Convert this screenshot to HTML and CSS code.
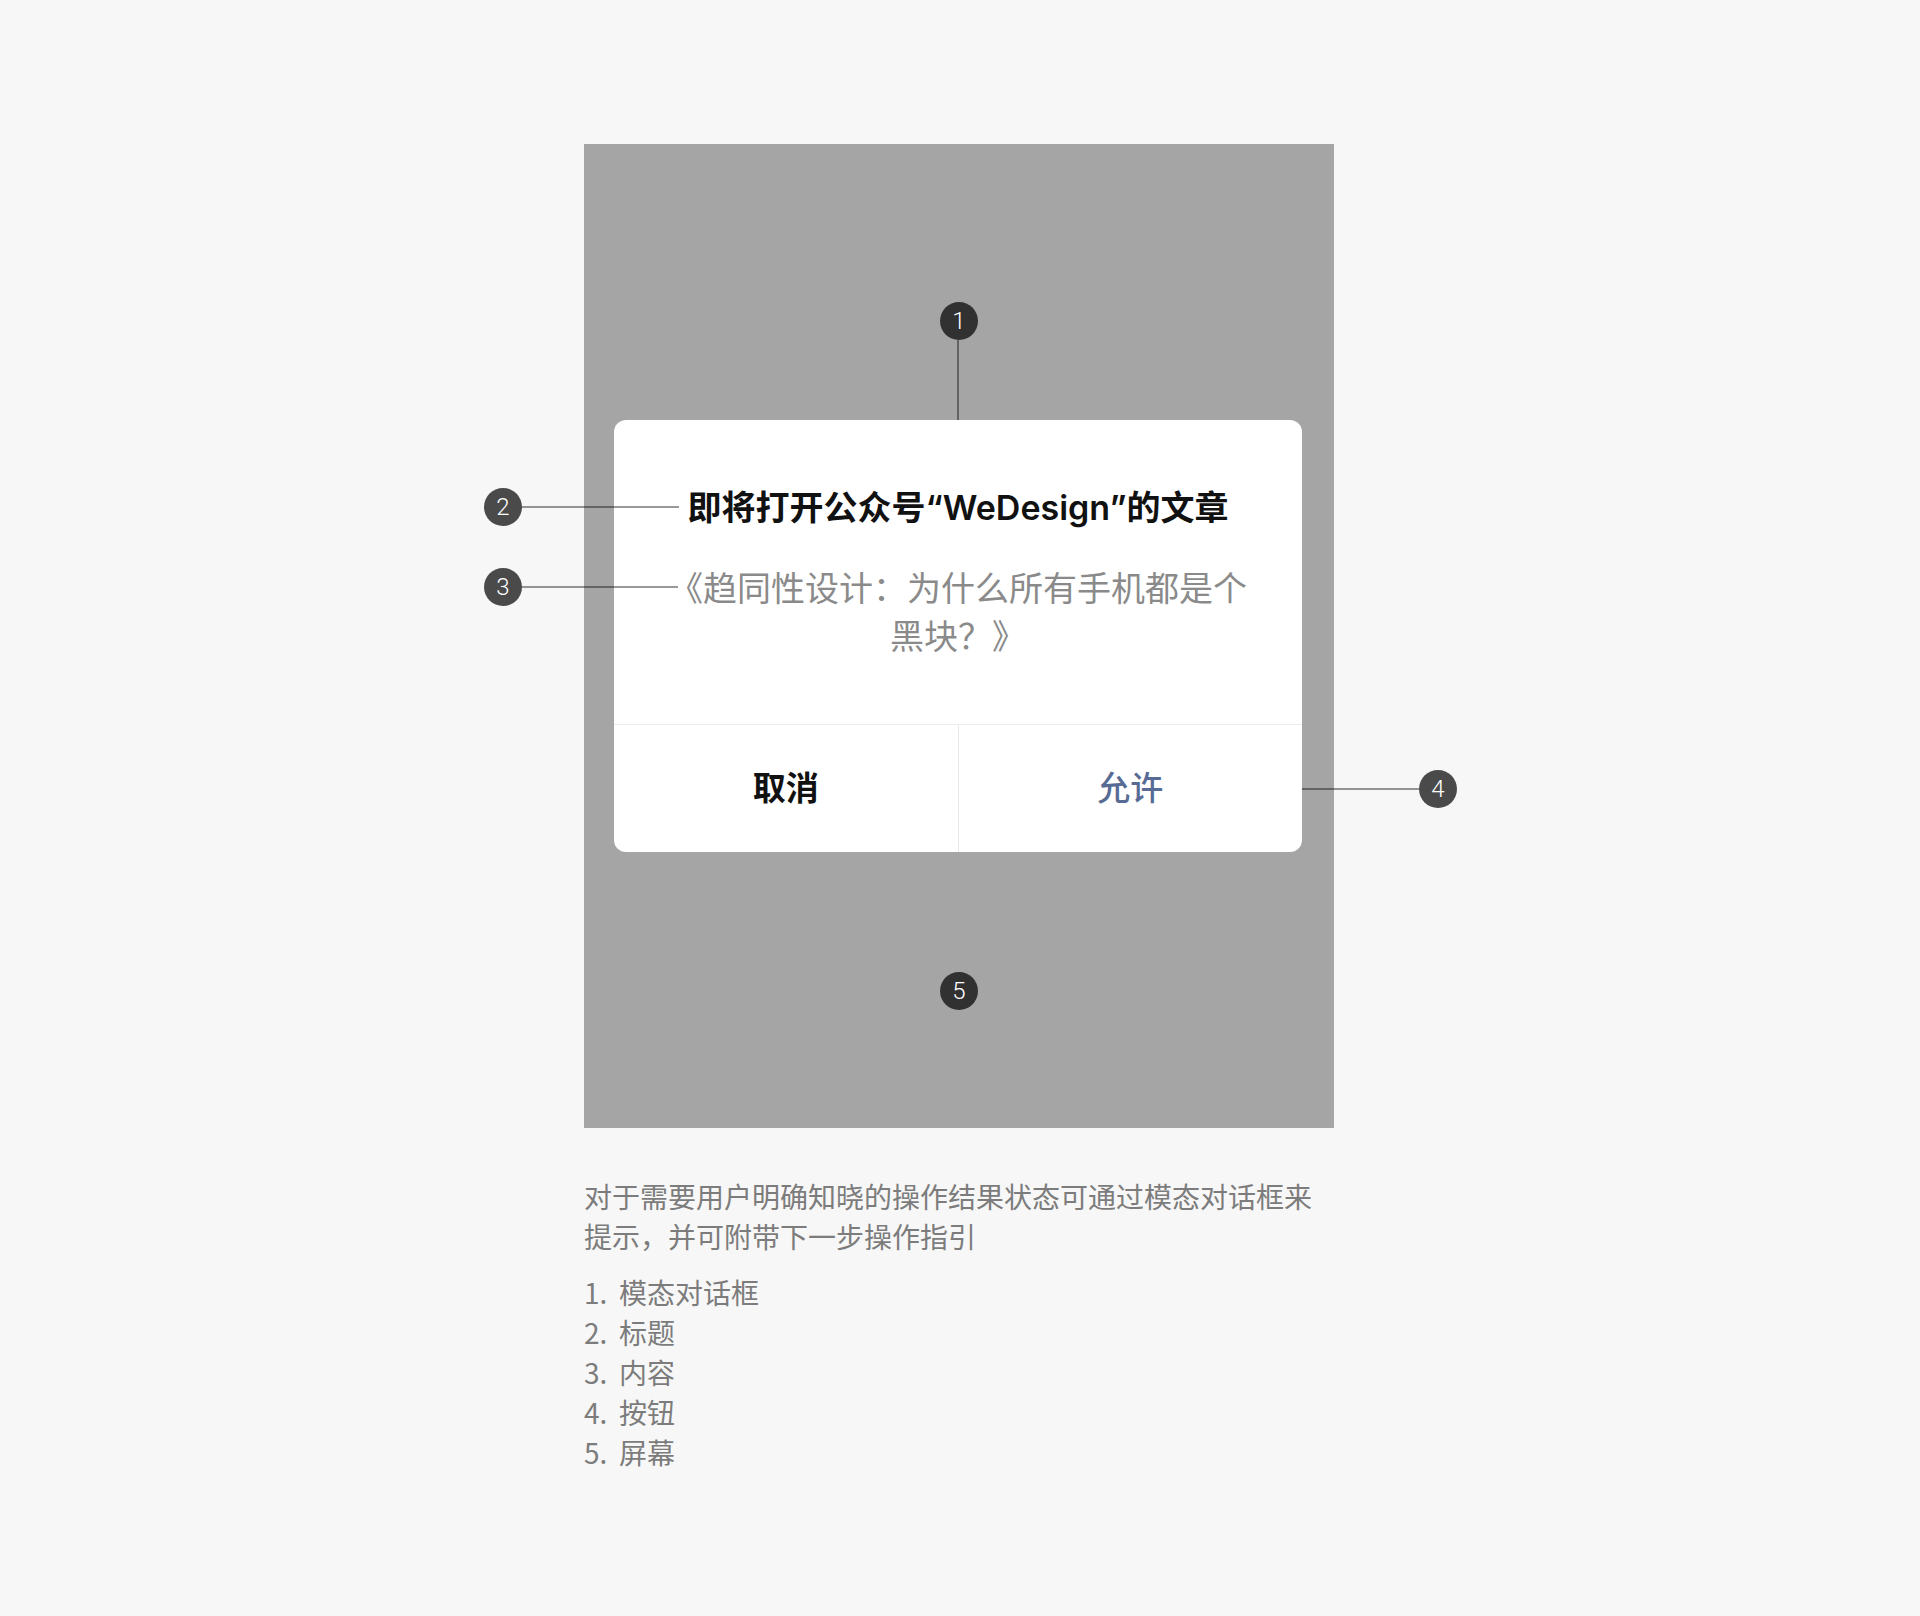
FILE: index.html
```html
<!DOCTYPE html>
<html lang="zh-CN">
<head>
<meta charset="utf-8">
<title>模态对话框</title>
<link rel="stylesheet" href="styles.css">
</head>
<body>
<main class="page">
  <section class="screen">
    <div class="dialog">
      <div class="dialog-body">
        <h2 class="dialog-title">即将打开公众号“WeDesign”的文章</h2>
        <p class="dialog-text">《趋同性设计：为什么所有手机都是个黑块？》</p>
      </div>
      <div class="dialog-actions">
        <div class="btn btn-default">取消</div>
        <div class="btn btn-primary">允许</div>
      </div>
    </div>

    <span class="line line-1"></span>
    <span class="badge badge-1">1</span>
    <span class="line line-2"></span>
    <span class="badge badge-2">2</span>
    <span class="line line-3"></span>
    <span class="badge badge-3">3</span>
    <span class="line line-4"></span>
    <span class="badge badge-4">4</span>
    <span class="badge badge-5">5</span>
  </section>

  <p class="desc">对于需要用户明确知晓的操作结果状态可通过模态对话框来提示，并可附带下一步操作指引</p>
  <ol class="legend">
    <li><span class="num">1.</span><span>模态对话框</span></li>
    <li><span class="num">2.</span><span>标题</span></li>
    <li><span class="num">3.</span><span>内容</span></li>
    <li><span class="num">4.</span><span>按钮</span></li>
    <li><span class="num">5.</span><span>屏幕</span></li>
  </ol>
</main>
</body>
</html>
```

FILE: styles.css
```css
* { box-sizing: border-box; }

html, body {
  margin: 0;
  padding: 0;
  background: #f7f7f7;
}

body {
  font-family: "Noto Sans CJK SC", "Noto Sans", sans-serif;
  color: #111;
}

.page {
  width: 750px;
  margin-left: calc(50% - 376px);
  padding: 144px 0 80px;
}

.screen {
  position: relative;
  width: 750px;
  height: 984px;
  background: #a5a5a5;
  display: flex;
  align-items: center;
  justify-content: flex-start;
  padding-left: 30px;
}

.dialog {
  width: 688px;
  background: #fff;
  border-radius: 12px;
  overflow: hidden;
}

.dialog-body {
  padding: 64px 48px 65px;
  text-align: center;
}

.dialog-title {
  margin: 0 0 31px;
  font-family: "Inter", "Noto Sans CJK SC", sans-serif;
  font-size: 34px;
  line-height: 48px;
  font-weight: 600;
  color: #111;
  white-space: nowrap;
}

.dialog-text {
  margin: 0;
  font-size: 34px;
  line-height: 48px;
  color: #8a8a8a;
}

.dialog-actions {
  display: flex;
  height: 128px;
  border-top: 1px solid #ececec;
}

.btn {
  flex: 1;
  display: flex;
  align-items: center;
  justify-content: center;
  font-size: 33px;
  padding-bottom: 6px;
}

.btn + .btn {
  border-left: 1px solid #e8e8e8;
}

.btn-default {
  color: #111;
  font-weight: 700;
}

.btn-primary {
  color: #576b95;
  font-weight: 500;
}

/* annotations */
.badge {
  position: absolute;
  width: 38px;
  height: 38px;
  border-radius: 50%;
  background: rgba(0, 0, 0, 0.7);
  color: #fff;
  display: flex;
  align-items: center;
  justify-content: center;
  font-family: "Roboto", "Liberation Sans", sans-serif;
  font-weight: 300;
  font-size: 24px;
  line-height: 1;
}

.line {
  position: absolute;
  background: rgba(0, 0, 0, 0.4);
}

.badge-1 { left: 356px; top: 158px; }
.line-1 { left: 373px; top: 196px; width: 2px; height: 80px; }

.badge-2 { left: -100px; top: 344px; }
.line-2 { left: -62px; top: 362px; width: 157px; height: 2px; }

.badge-3 { left: -100px; top: 424px; }
.line-3 { left: -62px; top: 442px; width: 156px; height: 2px; }

.badge-4 { left: 835px; top: 626px; }
.line-4 { left: 718px; top: 644px; width: 117px; height: 2px; }

.badge-5 { left: 356px; top: 828px; }

/* description */
.desc {
  margin: 48px 0 16px;
  max-width: 736px;
  font-size: 28px;
  line-height: 40px;
  color: #7c7c7c;
}

.legend {
  margin: 0;
  padding: 0;
  list-style: none;
  font-size: 28px;
  line-height: 40px;
  color: #7c7c7c;
}

.legend li {
  display: flex;
}

.legend .num {
  width: 35px;
  flex: none;
}
```
